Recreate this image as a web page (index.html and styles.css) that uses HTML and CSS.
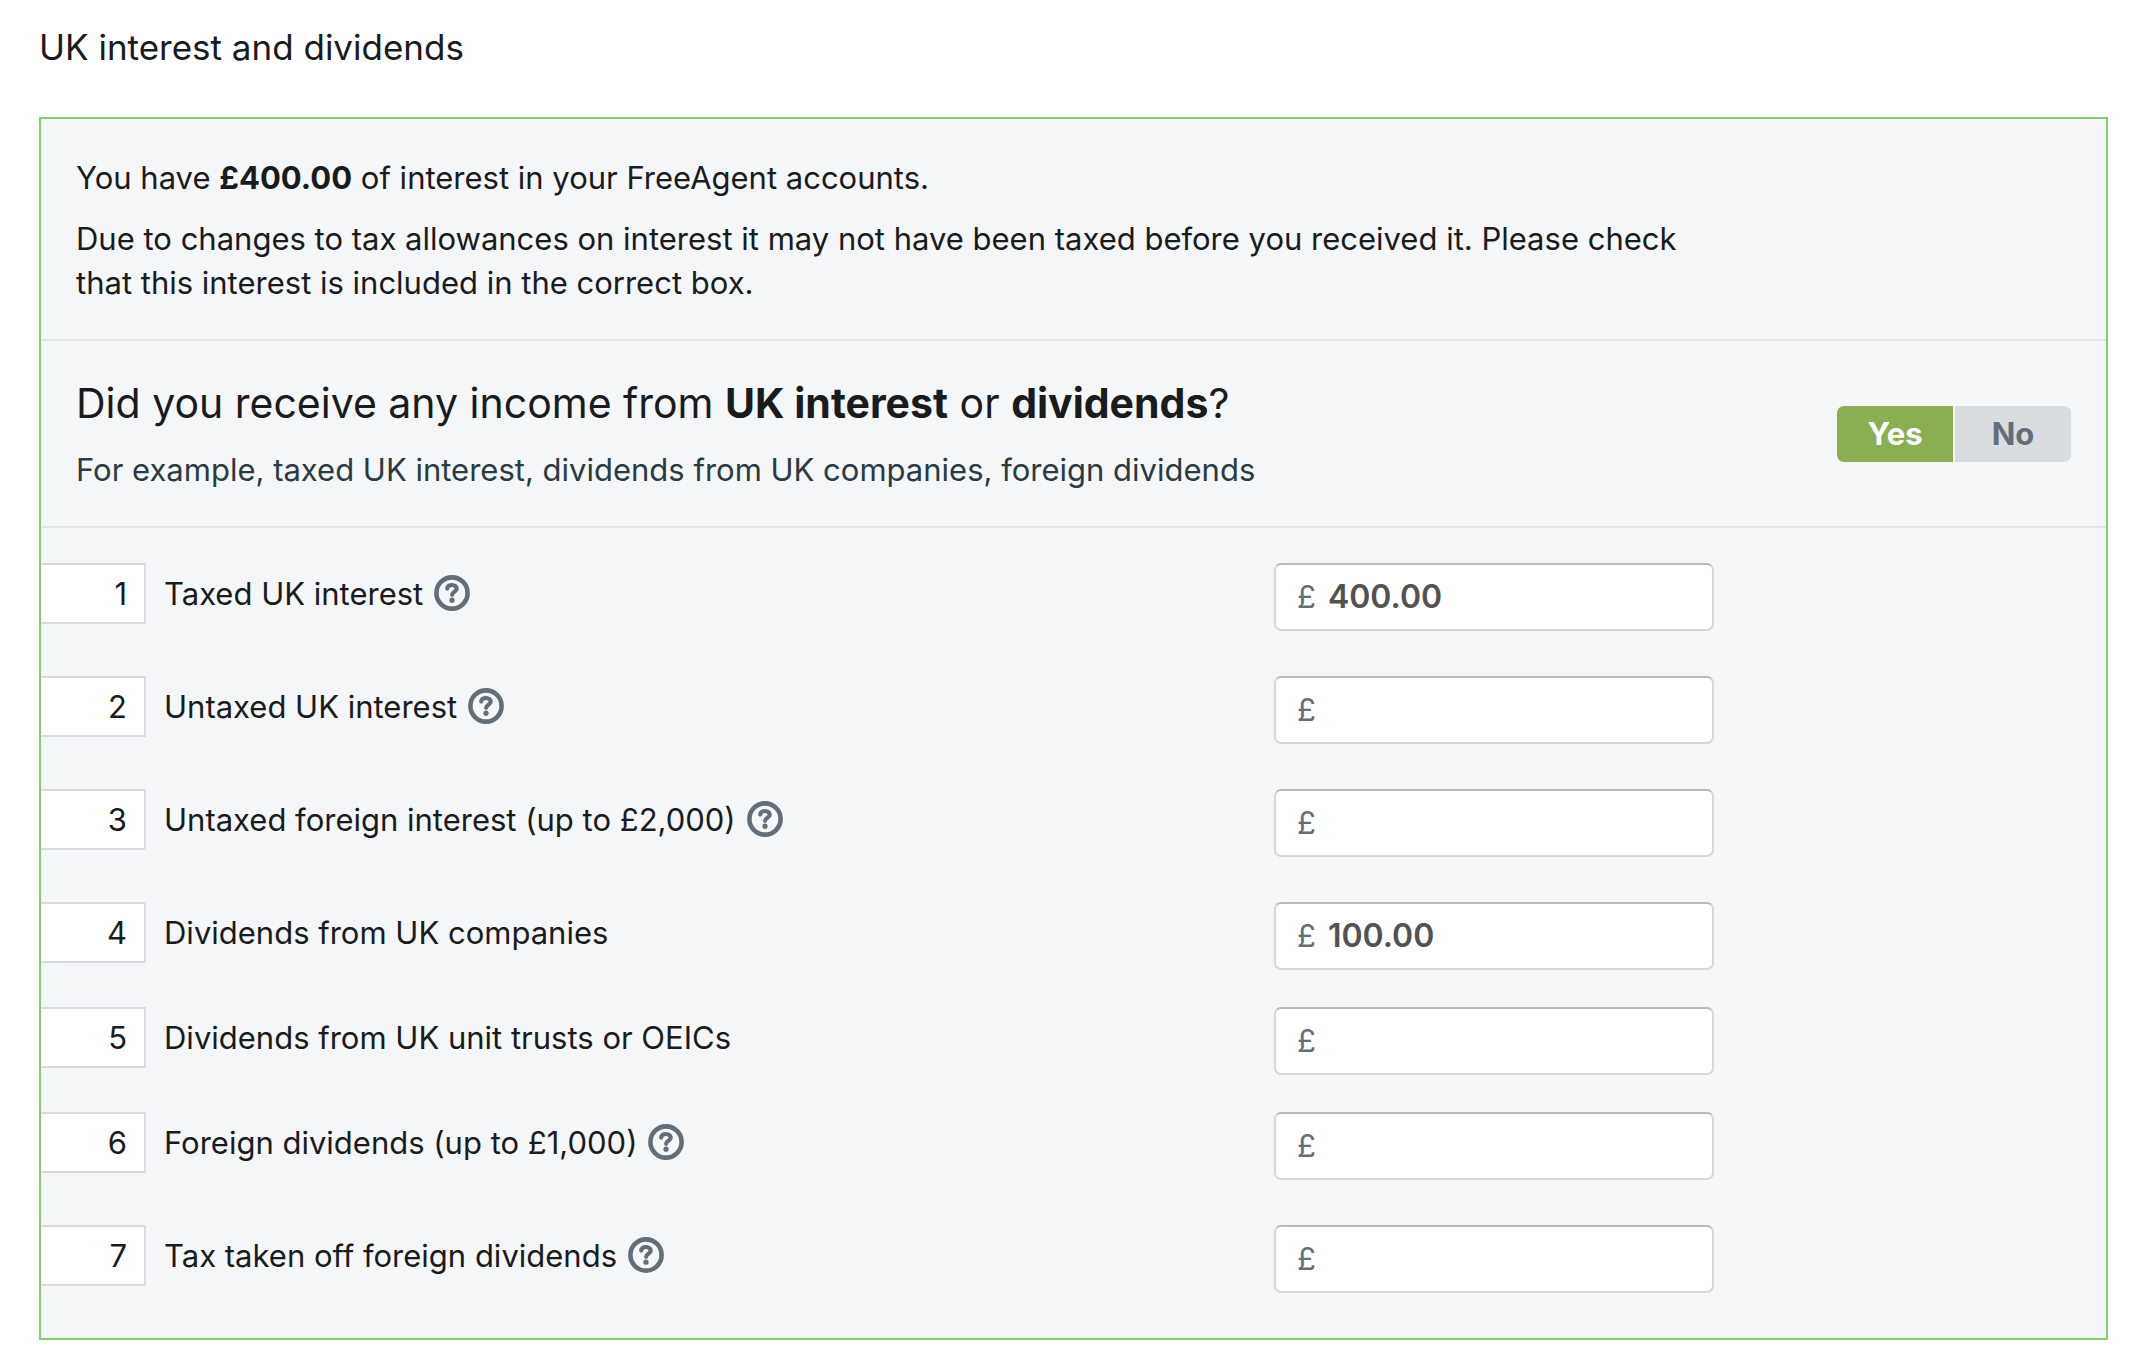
FILE: index.html
```
<!DOCTYPE html>
<html lang="en">
<head>
  <meta charset="UTF-8">
  <meta name="viewport" content="width=device-width, initial-scale=1.0">
  <title>UK interest and dividends</title>
  <link rel="stylesheet" href="styles.css">
</head>
<body>
  <svg class="sprite" aria-hidden="true">
    <symbol id="help" viewBox="0 0 36 36">
      <circle cx="18" cy="18" r="15.6" fill="none" stroke="currentColor" stroke-width="4.6"/>
      <path d="M13.2 13.6C13.2 11.4 15.2 10 18 10C20.9 10 22.7 11.5 22.7 13.8C22.7 16.8 18.1 16.6 18.1 19.8" fill="none" stroke="currentColor" stroke-width="4.2" stroke-linecap="round" stroke-linejoin="round"/>
      <circle cx="18" cy="25.2" r="2.6" fill="currentColor"/>
    </symbol>
  </svg>

  <h1 class="title">UK interest and dividends</h1>

  <form class="panel">
    <div class="notice">
      <p>You have <strong>£400.00</strong> of interest in your FreeAgent accounts.</p>
      <p>Due to changes to tax allowances on interest it may not have been taxed before you received it. Please check that this interest is included in the correct box.</p>
    </div>

    <div class="question">
      <div class="question-text">
        <h2>Did you receive any income from <strong>UK interest</strong> or <strong>dividends</strong>?</h2>
        <p>For example, taxed UK interest, dividends from UK companies, foreign dividends</p>
      </div>
      <div class="toggle" role="group" aria-label="Received UK interest or dividends">
        <button type="button" class="toggle-btn active" aria-pressed="true">Yes</button>
        <button type="button" class="toggle-btn" aria-pressed="false">No</button>
      </div>
    </div>

    <div class="rows">
      <div class="row with-help">
        <span class="number">1</span>
        <div class="label">
          <label for="box1">Taxed UK interest</label>
          <button type="button" class="help" aria-label="Help"><svg><use href="#help"/></svg></button>
        </div>
        <div class="money"><span>£</span><input type="text" id="box1" value="400.00"></div>
      </div>
      <div class="row with-help">
        <span class="number">2</span>
        <div class="label">
          <label for="box2">Untaxed UK interest</label>
          <button type="button" class="help" aria-label="Help"><svg><use href="#help"/></svg></button>
        </div>
        <div class="money"><span>£</span><input type="text" id="box2"></div>
      </div>
      <div class="row with-help">
        <span class="number">3</span>
        <div class="label">
          <label for="box3">Untaxed foreign interest (up to £2,000)</label>
          <button type="button" class="help" aria-label="Help"><svg><use href="#help"/></svg></button>
        </div>
        <div class="money"><span>£</span><input type="text" id="box3"></div>
      </div>
      <div class="row">
        <span class="number">4</span>
        <div class="label">
          <label for="box4">Dividends from UK companies</label>
        </div>
        <div class="money"><span>£</span><input type="text" id="box4" value="100.00"></div>
      </div>
      <div class="row">
        <span class="number">5</span>
        <div class="label">
          <label for="box5">Dividends from UK unit trusts or OEICs</label>
        </div>
        <div class="money"><span>£</span><input type="text" id="box5"></div>
      </div>
      <div class="row with-help">
        <span class="number">6</span>
        <div class="label">
          <label for="box6">Foreign dividends (up to £1,000)</label>
          <button type="button" class="help" aria-label="Help"><svg><use href="#help"/></svg></button>
        </div>
        <div class="money"><span>£</span><input type="text" id="box6"></div>
      </div>
      <div class="row with-help">
        <span class="number">7</span>
        <div class="label">
          <label for="box7">Tax taken off foreign dividends</label>
          <button type="button" class="help" aria-label="Help"><svg><use href="#help"/></svg></button>
        </div>
        <div class="money"><span>£</span><input type="text" id="box7"></div>
      </div>
    </div>
  </form>
</body>
</html>
```
FILE: styles.css
```
* {
  box-sizing: border-box;
}

body {
  margin: 0;
  padding: 23px 38px 29px 39px;
  background: #fff;
  color: #1a1b1d;
  font-family: Inter, "Liberation Sans", sans-serif;
  font-size: 31px;
  line-height: 44px;
}

h1, h2, p {
  margin: 0;
  font-weight: 400;
}

button, input {
  font: inherit;
}

.sprite {
  display: none;
}

.title {
  margin-bottom: 46px;
  font-size: 35px;
  line-height: 48px;
}

.panel {
  border: 2px solid #8bc978;
  background: #f4f6f8;
}

.notice {
  padding: 37px 35px 34px;
  border-bottom: 2px solid #e0e2e4;
}

.notice p {
  max-width: 1640px;
}

.notice p + p {
  margin-top: 17px;
}

.question {
  display: flex;
  align-items: center;
  justify-content: space-between;
  padding: 34px 35px;
  border-bottom: 2px solid #e0e2e4;
}

.question h2 {
  margin-bottom: 17px;
  font-size: 41px;
  line-height: 56px;
}

.question p {
  color: #2c3a42;
}

.toggle {
  display: flex;
  gap: 2px;
}

.toggle-btn {
  width: 116px;
  height: 56px;
  padding: 0;
  border: 0;
  border-radius: 0 7px 7px 0;
  background: #d9dde0;
  color: #626e78;
  font-weight: 700;
}

.toggle-btn.active {
  border-radius: 7px 0 0 7px;
  background: #8cae52;
  color: #fff;
}

.rows {
  padding-top: 35px;
}

.row {
  display: grid;
  grid-template-columns: 105px 1128fr 832fr;
  align-items: start;
  padding-bottom: 37px;
}

.with-help {
  padding-bottom: 45px;
}

.number {
  height: 61px;
  padding-right: 17px;
  border: 2px solid #d9dcdf;
  border-left: 0;
  background: #fff;
  line-height: 57px;
  text-align: right;
}

.label {
  display: flex;
  align-items: center;
  gap: 11px;
  padding: 9px 0 0 18px;
}

.help {
  padding: 0;
  border: 0;
  background: none;
  color: #626e78;
}

.help svg {
  display: block;
  width: 36px;
  height: 36px;
  margin-bottom: 2px;
}

.money {
  display: flex;
  align-items: center;
  gap: 12px;
  width: 440px;
  height: 68px;
  padding: 0 21px;
  border: 2px solid #d6d7d9;
  border-top-color: #b9babb;
  border-radius: 7px;
  background: #fff;
  color: #626e78;
}

.money input {
  flex: 1;
  min-width: 0;
  padding: 0;
  border: 0;
  outline: 0;
  background: none;
  color: #525252;
  font-size: 32px;
  font-weight: 600;
}
```
